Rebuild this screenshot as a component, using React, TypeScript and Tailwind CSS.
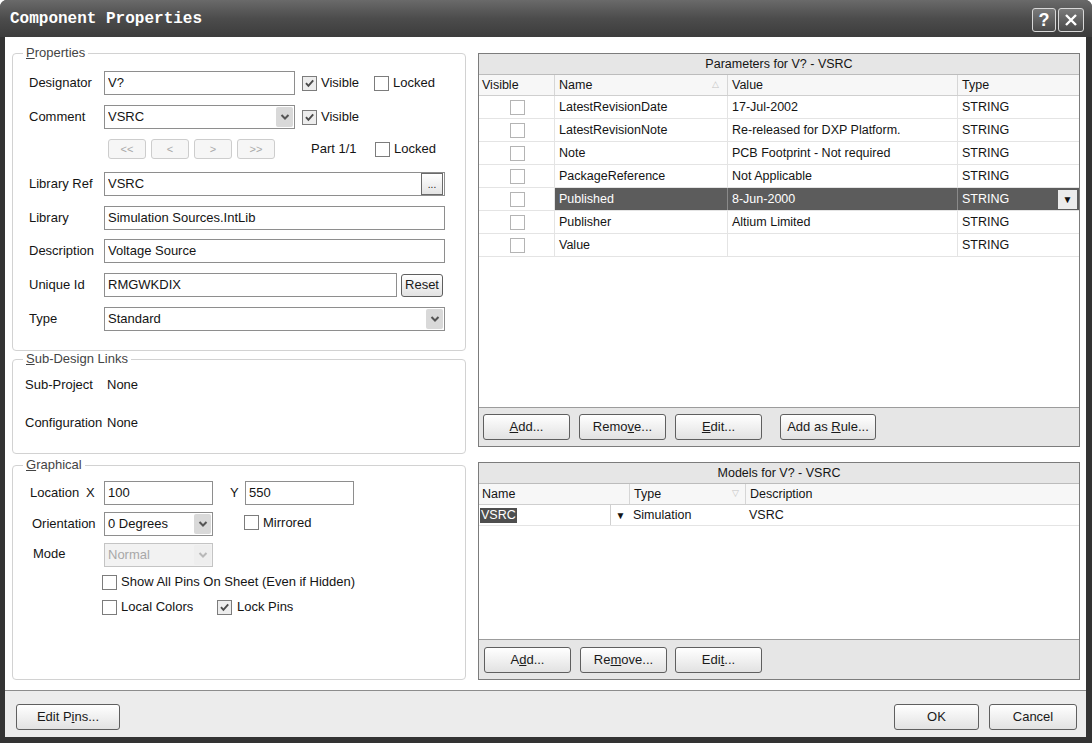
import React from 'react';

// small building blocks for the old-style dialog
const Check = ({ checked = false, light = false }: { checked?: boolean; light?: boolean }) => (
  <span
    className={`inline-flex w-[15px] h-[15px] shrink-0 items-center justify-center border ${
      light ? 'border-[#b4b4b4]' : 'border-[#7c7c7c]'
    } ${checked ? 'bg-[#ededed]' : 'bg-white'}`}
  >
    {checked && (
      <svg width="11" height="11" viewBox="0 0 11 11">
        <path d="M2 5.2 L4.4 7.8 L9.2 2.4" stroke="#4a4a4a" strokeWidth="1.9" fill="none" />
      </svg>
    )}
  </span>
);

const Chevron = ({ disabled = false }: { disabled?: boolean }) => (
  <span
    className={`flex w-[17px] h-[20px] items-center justify-center rounded-[2px] ${
      disabled ? 'bg-[#eeeeee]' : 'bg-[#d9d9d9]'
    }`}
  >
    <svg width="10" height="8" viewBox="0 0 10 8">
      <path d="M1.5 2 L5 5.5 L8.5 2" stroke={disabled ? '#b8b8b8' : '#555'} strokeWidth="2" fill="none" />
    </svg>
  </span>
);

const Input = ({ value, w, children }: { value: string; w: string; children?: React.ReactNode }) => (
  <div className={`${w} h-[24px] flex items-center border border-[#8e8e8e] bg-white pl-[3px] pr-[1px]`}>
    <span className="flex-1 truncate">{value}</span>
    {children}
  </div>
);

const Combo = ({ value, w, disabled = false }: { value: string; w: string; disabled?: boolean }) => (
  <div
    className={`${w} h-[24px] flex items-center border pl-[3px] pr-[1px] ${
      disabled ? 'border-[#c4c4c4] bg-[#f2f2f2] text-[#a8a8a8]' : 'border-[#8e8e8e] bg-white'
    }`}
  >
    <span className="flex-1 truncate">{value}</span>
    <Chevron disabled={disabled} />
  </div>
);

const Btn = ({ children, w, h = 'h-[26px]' }: { children: React.ReactNode; w: string; h?: string }) => (
  <button
    className={`${w} ${h} shrink-0 flex items-center justify-center rounded-[3px] border border-[#5f5f5f] bg-gradient-to-b from-white to-[#e2e2e2] text-[13px] text-[#1a1a1a]`}
  >
    <span className="whitespace-pre">{children}</span>
  </button>
);

const NavBtn = ({ children }: { children: React.ReactNode }) => (
  <span className="w-[38px] h-[20px] flex items-center justify-center rounded-[3px] border border-[#cdcdcd] bg-[#f6f6f6] text-[11px] text-[#a9a9a9]">
    {children}
  </span>
);

const Group = ({ title, accel, h, className = '', children }: { title: string; accel: string; h: string; className?: string; children: React.ReactNode }) => (
  <fieldset className={`w-[454px] ${h} border border-[#d2d2d2] rounded-[4px] ${className}`}>
    <legend className="ml-[10px] px-[3px] text-[13px] leading-[16px] text-[#444]">
      <u>{accel}</u>
      {title}
    </legend>
    {children}
  </fieldset>
);

const params = [
  { name: 'LatestRevisionDate', value: '17-Jul-2002' },
  { name: 'LatestRevisionNote', value: 'Re-released for DXP Platform.' },
  { name: 'Note', value: 'PCB Footprint - Not required' },
  { name: 'PackageReference', value: 'Not Applicable' },
  { name: 'Published', value: '8-Jun-2000', selected: true },
  { name: 'Publisher', value: 'Altium Limited' },
  { name: 'Value', value: '' },
];

export default function App() {
  return (
    <div className="w-[1092px] h-[743px] flex flex-col overflow-hidden rounded-t-[7px] bg-[#333333] font-['Liberation_Sans',Arial,sans-serif] text-[13px] text-[#141414]">
      {/* title bar */}
      <div className="h-[37px] flex items-center pl-[10px] pr-[8px] bg-gradient-to-b from-[#6a6a6a] via-[#4c4c4c] to-[#3c3c3c]">
        <span className="font-['Liberation_Mono',monospace] font-bold text-[16px] text-white">Component Properties</span>
        <div className="ml-auto flex gap-[2px] pt-[3px]">
          <span className="w-[24px] h-[24px] flex items-center justify-center rounded-[3px] border border-[#d8d8d8] bg-gradient-to-b from-[#7a7a7a] to-[#4a4a4a] text-white text-[18px] font-bold leading-none">?</span>
          <span className="w-[26px] h-[24px] flex items-center justify-center rounded-[3px] border border-[#d8d8d8] bg-gradient-to-b from-[#7a7a7a] to-[#4a4a4a]">
            <svg width="16" height="16" viewBox="0 0 16 16">
              <path d="M3 3 L13 13 M13 3 L3 13" stroke="white" strokeWidth="2.4" />
            </svg>
          </span>
        </div>
      </div>

      {/* frame body */}
      <div className="flex-1 flex pl-[5px] pr-[6px] pb-[6px]">
        <div className="flex-1 flex flex-col bg-white">
          <div className="h-[653px] flex">
            {/* left column */}
            <div className="w-[467px] pl-[7px] pt-[8px] flex flex-col">
              <Group title="roperties" accel="P" h="h-[306px]">
                <div className="pt-[10px] pl-[16px]">
                  <div className="flex items-center h-[24px]">
                    <span className="w-[75px]">Designator</span>
                    <Input value="V?" w="w-[191px]" />
                    <span className="ml-[7px] w-[72px] flex items-center gap-[4px]"><Check checked />Visible</span>
                    <span className="flex items-center gap-[4px]"><Check />Locked</span>
                  </div>
                  <div className="flex items-center h-[24px] mt-[10px]">
                    <span className="w-[75px]">Comment</span>
                    <Combo value="VSRC" w="w-[191px]" />
                    <span className="ml-[7px] w-[72px] flex items-center gap-[4px]"><Check checked />Visible</span>
                  </div>
                  <div className="flex items-center h-[20px] mt-[10px]">
                    <span className="w-[79px]" />
                    <div className="flex gap-[5px]">
                      <NavBtn>&lt;&lt;</NavBtn>
                      <NavBtn>&lt;</NavBtn>
                      <NavBtn>&gt;</NavBtn>
                      <NavBtn>&gt;&gt;</NavBtn>
                    </div>
                    <span className="ml-[36px] w-[64px]">Part 1/1</span>
                    <span className="flex items-center gap-[4px]"><Check />Locked</span>
                  </div>
                  <div className="flex items-center h-[24px] mt-[13px]">
                    <span className="w-[75px]">Library Ref</span>
                    <Input value="VSRC" w="w-[341px]">
                      <span className="w-[22px] h-[22px] flex items-end justify-center pb-[4px] border border-[#6a6a6a] bg-gradient-to-b from-white to-[#e4e4e4] text-[10px] leading-none">...</span>
                    </Input>
                  </div>
                  <div className="flex items-center h-[24px] mt-[10px]">
                    <span className="w-[75px]">Library</span>
                    <Input value="Simulation Sources.IntLib" w="w-[341px]" />
                  </div>
                  <div className="flex items-center h-[24px] mt-[9px]">
                    <span className="w-[75px]">Description</span>
                    <Input value="Voltage Source" w="w-[341px]" />
                  </div>
                  <div className="flex items-center h-[24px] mt-[10px]">
                    <span className="w-[75px]">Unique Id</span>
                    <Input value="RMGWKDIX" w="w-[293px]" />
                    <span className="ml-[4px]"><Btn w="w-[42px]" h="h-[23px]">Reset</Btn></span>
                  </div>
                  <div className="flex items-center h-[24px] mt-[10px]">
                    <span className="w-[75px]">Type</span>
                    <Combo value="Standard" w="w-[341px]" />
                  </div>
                </div>
              </Group>

              <Group title="ub-Design Links" accel="S" h="h-[103px]">
                <div className="pl-[12px] pt-[10px]">
                  <div className="flex h-[16px] items-center">
                    <span className="w-[82px]">Sub-Project</span>
                    <span>None</span>
                  </div>
                  <div className="flex h-[16px] items-center mt-[22px]">
                    <span className="w-[82px]">Configuration</span>
                    <span>None</span>
                  </div>
                </div>
              </Group>

              <Group title="raphical" accel="G" h="h-[223px]" className="mt-[3px]">
                <div className="pt-[8px]">
                  <div className="flex items-center h-[24px]">
                    <span className="pl-[17px] w-[91px] flex">
                      <span className="w-[56px]">Location</span>
                      <span>X</span>
                    </span>
                    <Input value="100" w="w-[109px]" />
                    <span className="ml-[17px] w-[15px]">Y</span>
                    <Input value="550" w="w-[109px]" />
                  </div>
                  <div className="flex items-center h-[24px] mt-[7px]">
                    <span className="pl-[19px] w-[91px]">Orientation</span>
                    <Combo value="0 Degrees" w="w-[109px]" />
                    <span className="ml-[31px] flex items-center gap-[4px] -mt-[3px]"><Check />Mirrored</span>
                  </div>
                  <div className="flex items-center h-[24px] mt-[7px]">
                    <span className="pl-[20px] w-[91px] -mt-[2px]">Mode</span>
                    <Combo value="Normal" w="w-[109px]" disabled />
                  </div>
                  <div className="flex items-center h-[16px] mt-[7px] pl-[89px] gap-[4px]">
                    <Check />
                    <span>Show All Pins On Sheet (Even if Hidden)</span>
                  </div>
                  <div className="flex items-center h-[16px] mt-[9px] pl-[89px]">
                    <span className="w-[115px] flex items-center gap-[4px]"><Check />Local Colors</span>
                    <span className="flex items-center gap-[5px]"><Check checked />Lock Pins</span>
                  </div>
                </div>
              </Group>
            </div>

            {/* right column */}
            <div className="pl-[6px] pt-[16px] flex flex-col text-[12.5px]">
              <div className="w-[602px] h-[394px] flex flex-col border border-[#7c7c7c]">
                <div className="h-[21px] shrink-0 flex items-center justify-center bg-[#e6e6e6] border-b border-[#bcbcbc]">
                  Parameters for V? - VSRC
                </div>
                <div className="h-[21px] shrink-0 flex border-b border-[#cfcfcf] bg-[#f7f7f7]">
                  <span className="w-[76px] pl-[3px] flex items-center border-r border-[#d6d6d6]">Visible</span>
                  <span className="w-[173px] pl-[4px] pr-[8px] flex items-center justify-between border-r border-[#d6d6d6]">
                    Name<span className="text-[9px] text-[#c4c4c4]">△</span>
                  </span>
                  <span className="w-[230px] pl-[4px] flex items-center border-r border-[#d6d6d6]">Value</span>
                  <span className="flex-1 pl-[4px] flex items-center">Type</span>
                </div>
                {params.map((p) => (
                  <div key={p.name} className="h-[23px] shrink-0 flex border-b border-[#e4e4e4]">
                    <span className="w-[76px] flex items-center pl-[31px] border-r border-[#e4e4e4]">
                      <Check light />
                    </span>
                    <div className={`flex flex-1 ${p.selected ? 'bg-[#5c5c5c] text-white' : ''}`}>
                      <span className={`w-[173px] pl-[4px] flex items-center border-r ${p.selected ? 'border-[#8a8a8a]' : 'border-[#e4e4e4]'}`}>{p.name}</span>
                      <span className={`w-[230px] pl-[4px] flex items-center border-r ${p.selected ? 'border-[#8a8a8a]' : 'border-[#e4e4e4]'}`}>{p.value}</span>
                      <span className="flex-1 pl-[4px] pr-[2px] flex items-center justify-between">
                        STRING
                        {p.selected && (
                          <span className="w-[19px] h-[19px] flex items-center justify-center bg-[#ececec] text-[#111] text-[10px]">▼</span>
                        )}
                      </span>
                    </div>
                  </div>
                ))}
                <div className="flex-1 bg-white" />
                <div className="h-[39px] shrink-0 flex items-start pt-[6px] pl-[4px] bg-[#e6e6e6] border-t border-[#9c9c9c]">
                  <Btn w="w-[87px]"><u>A</u>dd...</Btn>
                  <span className="ml-[9px]"><Btn w="w-[87px]">Remo<u>v</u>e...</Btn></span>
                  <span className="ml-[9px]"><Btn w="w-[87px]"><u>E</u>dit...</Btn></span>
                  <span className="ml-[18px]"><Btn w="w-[96px]">Add as <u>R</u>ule...</Btn></span>
                </div>
              </div>

              <div className="w-[602px] h-[218px] mt-[15px] flex flex-col border border-[#7c7c7c]">
                <div className="h-[21px] shrink-0 flex items-center justify-center bg-[#e6e6e6] border-b border-[#bcbcbc]">
                  Models for V? - VSRC
                </div>
                <div className="h-[21px] shrink-0 flex border-b border-[#cfcfcf] bg-[#f7f7f7]">
                  <span className="w-[151px] pl-[3px] flex items-center border-r border-[#d6d6d6]">Name</span>
                  <span className="w-[116px] pl-[4px] pr-[6px] flex items-center justify-between border-r border-[#d6d6d6]">
                    Type<span className="text-[9px] text-[#c4c4c4]">▽</span>
                  </span>
                  <span className="flex-1 pl-[4px] flex items-center">Description</span>
                </div>
                <div className="h-[21px] shrink-0 flex border-b border-[#e4e4e4]">
                  <span className="w-[151px] pl-[1px] flex items-center">
                    <span className="bg-[#4e4e4e] text-white px-[1px] leading-[15px]">VSRC</span>
                    <span className="ml-auto w-[20px] h-[20px] flex items-center justify-center border-l border-[#d0d0d0] text-[10px]">▼</span>
                  </span>
                  <span className="w-[116px] pl-[3px] flex items-center">Simulation</span>
                  <span className="flex-1 pl-[3px] flex items-center">VSRC</span>
                </div>
                <div className="flex-1 bg-white" />
                <div className="h-[40px] shrink-0 flex items-start pt-[7px] pl-[5px] bg-[#e6e6e6] border-t border-[#9c9c9c]">
                  <Btn w="w-[87px]">A<u>d</u>d...</Btn>
                  <span className="ml-[9px]"><Btn w="w-[87px]">Re<u>m</u>ove...</Btn></span>
                  <span className="ml-[8px]"><Btn w="w-[87px]">Edi<u>t</u>...</Btn></span>
                </div>
              </div>
            </div>
          </div>

          {/* bottom bar */}
          <div className="flex-1 flex items-start pt-[13px] pl-[11px] pr-[9px] bg-[#ececec] border-t border-[#8c8c8c]">
            <Btn w="w-[104px]">Edit P<u>i</u>ns...</Btn>
            <span className="ml-auto"><Btn w="w-[85px]">OK</Btn></span>
            <span className="ml-[10px]"><Btn w="w-[88px]">Cancel</Btn></span>
          </div>
        </div>
      </div>
    </div>
  );
}
